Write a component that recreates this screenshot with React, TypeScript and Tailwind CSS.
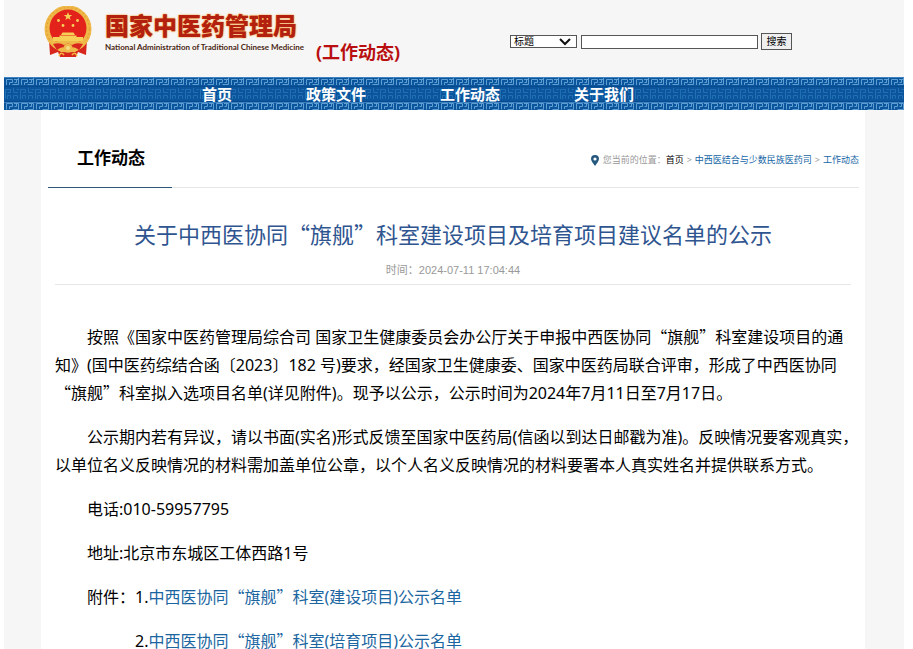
import React from "react";

function Quoted({ children }: { children: React.ReactNode }) {
  return <span className="font-['Noto_Sans_CJK_SC',sans-serif] leading-none">“{children}”</span>;
}

function Emblem() {
  return (
    <svg viewBox="0 0 48 52" className="h-[52px] w-12 shrink-0" aria-hidden="true">
      <path d="M5 34 L43 34 L42 49 L34 46 L32 51 L16 51 L14 46 L6 49 Z" fill="#d8261c" />
      <circle cx="24" cy="23" r="23.5" fill="#efb94a" />
      <circle cx="24" cy="23" r="21.5" fill="none" stroke="#e6a637" strokeWidth="1.5" strokeDasharray="2 2" />
      <circle cx="24" cy="22" r="18.5" fill="#e3231b" />
      <polygon points="24,6 25.1,9 28.2,9 25.7,10.9 26.6,14 24,12.2 21.4,14 22.3,10.9 19.8,9 22.9,9" fill="#f6cf57" />
      <g fill="#f6cf57">
        <circle cx="14.5" cy="14.5" r="1.4" />
        <circle cx="33.5" cy="14.5" r="1.4" />
        <circle cx="19" cy="19.5" r="1.4" />
        <circle cx="29" cy="19.5" r="1.4" />
        <path d="M17 29 L18.5 26.5 H29.5 L31 29 Z" />
        <path d="M15.5 31 V29.5 H32.5 V31 Z" />
        <rect x="9" y="31" width="30" height="4" />
      </g>
      <path d="M5 34 Q9 36 14 35 H34 Q39 36 43 34 L39 41 L31 46 H17 L9 41 Z" fill="#efb94a" />
      <path d="M9 38 Q16 36 20 39 Q24 36 28 39 Q32 36 39 38 L35 44 Q30 40 27 42 Q24 39 21 42 Q18 40 13 44 Z" fill="#d8261c" />
      <circle cx="24" cy="42" r="4.5" fill="#efb94a" />
      <circle cx="24" cy="42" r="2" fill="#f7dc86" />
      <path d="M15 50 Q17 45 20 49 M28 49 Q31 45 33 50" fill="none" stroke="#f0b840" strokeWidth="1.5" />
    </svg>
  );
}

function FretBackground() {
  return (
    <svg className="absolute inset-0 h-full w-full" aria-hidden="true">
      <defs>
        <pattern id="fret" width="15" height="33" patternUnits="userSpaceOnUse">
          <rect width="15" height="33" fill="#0b559d" />
          <g fill="none" stroke="#5f9fd3" strokeWidth="1">
            <path d="M2.5 8 V2.5 H8.5 V5.5 H5.5 V8 M10 2.5 H14.5 M14.5 0 V7.5 H8.5 M12.5 2.5 V5.5 H10.5" />
            <path d="M2.5 32.5 V26.5 H8.5 V29.5 H5.5 V32 M10 26.5 H14.5 V32.5 H8.5 M12.5 26.5 V29.5 H10.5" />
          </g>
          <path d="M0 0.5 H15 M0 25.5 H15" stroke="#3c82c0" />
          <g fill="none" stroke="#2170b3" strokeWidth="1">
            <path d="M1.5 22 V12.5 H6.5 V15.5 H3.5 M3.5 22 V18.5 H6.5 V21.5 M9.5 11 V15.5 H14 M12.5 12.5 H15 M9.5 22 V18.5 H13.5 V21.5" />
          </g>
          <path d="M0 9.5 H15 M0 24.5 H15" stroke="#094a8e" />
        </pattern>
      </defs>
      <rect width="100%" height="100%" fill="url(#fret)" />
    </svg>
  );
}

const nav = ["首页", "政策文件", "工作动态", "关于我们"];

export default function App() {
  return (
    <div className="min-h-screen bg-white pl-1 pr-[9px] font-['Noto_Sans','Noto_Sans_CJK_SC',sans-serif] text-black" lang="zh-CN">
      <div className="bg-[#f6f6f6]">
        <header className="flex h-[77px] items-start">
          <div className="flex pl-10 pt-[6px]">
            <Emblem />
            <div className="ml-[13px] pt-[3px]">
              <div className="whitespace-nowrap font-['Noto_Sans_CJK_SC',sans-serif] text-[24px] font-black leading-8 text-[#b3200f] [text-shadow:0_0_2px_#f3a23c,0_0_1px_#f3a23c]">
                国家中医药管理局
              </div>
              <div className="whitespace-nowrap font-['Lato',sans-serif] text-[8px] font-bold leading-3 text-[#4a2613]">
                National Administration of Traditional Chinese Medicine
              </div>
            </div>
          </div>
          <div className="ml-3 whitespace-nowrap pt-10 text-[18px] font-bold leading-6 text-[#b90f10]">(工作动态)</div>
          <form className="ml-auto mr-[112px] flex items-center pt-[33px] text-[10px]" onSubmit={(e) => e.preventDefault()}>
            <div className="relative">
              <select aria-label="搜索范围" className="block h-[13px] w-[67px] appearance-none border border-[#555] bg-white pl-[3px] text-[10px] leading-[11px]">
                <option>标题</option>
              </select>
              <svg viewBox="0 0 12 8" className="pointer-events-none absolute right-[6px] top-[3px] h-2 w-3" aria-hidden="true">
                <path d="M1 1 L6 6 L11 1" fill="none" stroke="#111" strokeWidth="2" />
              </svg>
            </div>
            <input aria-label="关键词" type="text" className="ml-1 h-[14px] w-[177px] border border-[#555] bg-white px-1" />
            <button type="submit" className="ml-[3px] h-[17px] w-[31px] border border-[#555] bg-[#efefef] leading-[15px]">
              搜索
            </button>
          </form>
        </header>

        <nav className="relative h-[33px] overflow-hidden">
          <FretBackground />
          <ul className="relative flex h-full items-center gap-[74px] pl-[198px] pt-0.5 text-[15px] font-bold text-white">
            {nav.map((item) => (
              <li key={item}>
                <a href="#">{item}</a>
              </li>
            ))}
          </ul>
        </nav>

        <main className="ml-[37px] mr-[39px] bg-white">
          <div className="ml-[7px] mr-[6px] flex items-end justify-between border-b border-[#e3e5e7] pt-[30px]">
            <h2 className="-mb-px h-12 w-[124px] border-b border-[#2f5679] pl-[29px] text-[17px] font-bold leading-9">工作动态</h2>
            <div className="flex items-center pb-[18px] text-[9px] leading-[18px] text-[#999]">
              <svg viewBox="0 0 8 11" className="mr-1 h-[11px] w-2" aria-hidden="true">
                <path d="M4 0 A4 4 0 0 1 8 4 C8 6.5 5 9 4 11 C3 9 0 6.5 0 4 A4 4 0 0 1 4 0 Z" fill="#24587f" />
                <circle cx="4" cy="4" r="1.6" fill="#fff" />
              </svg>
              <span>您当前的位置：</span>
              <a href="#" className="text-black">首页</a>
              <span className="mx-[3px]">&gt;</span>
              <a href="#" className="text-[#1565a5]">中西医结合与少数民族医药司</a>
              <span className="mx-[3px]">&gt;</span>
              <a href="#" className="text-[#1565a5]">工作动态</a>
            </div>
          </div>

          <article className="px-[14px] pt-[30px]">
            <h1 className="text-center text-[22px] leading-8 text-[#2f5590]">
              关于中西医协同<Quoted>旗舰</Quoted>科室建设项目及培育项目建议名单的公示
            </h1>
            <div className="mb-[38px] border-b border-[#e6e6e6] pb-1 pt-[10px] text-center text-[11px] leading-5 text-[#999]">
              时间：<span className="font-['Liberation_Sans',sans-serif]">2024-07-11 17:04:44</span>
            </div>
            <div className="-mr-3 space-y-4 text-[16px] leading-7">
              <p className="indent-8">
                按照《国家中医药管理局综合司 国家卫生健康委员会办公厅关于申报中西医协同<Quoted>旗舰</Quoted>科室建设项目的通<br />
                知》(国中医药综结合函〔2023〕182 号)要求，经国家卫生健康委、国家中医药局联合评审，形成了中西医协同<br />
                <Quoted>旗舰</Quoted>科室拟入选项目名单(详见附件)。现予以公示，公示时间为2024年7月11日至7月17日。
              </p>
              <p className="indent-8">
                公示期内若有异议，请以书面(实名)形式反馈至国家中医药局(信函以到达日邮戳为准)。反映情况要客观真实，<br />
                以单位名义反映情况的材料需加盖单位公章，以个人名义反映情况的材料要署本人真实姓名并提供联系方式。
              </p>
              <p className="pl-8">电话:010-59957795</p>
              <p className="pl-8">地址:北京市东城区工体西路1号</p>
              <p className="pl-8">
                附件：1.<a href="#" className="text-[#1b66a0]">中西医协同<Quoted>旗舰</Quoted>科室(建设项目)公示名单</a>
              </p>
              <p className="pl-20">
                2.<a href="#" className="text-[#1b66a0]">中西医协同<Quoted>旗舰</Quoted>科室(培育项目)公示名单</a>
              </p>
            </div>
          </article>
        </main>
      </div>
    </div>
  );
}
